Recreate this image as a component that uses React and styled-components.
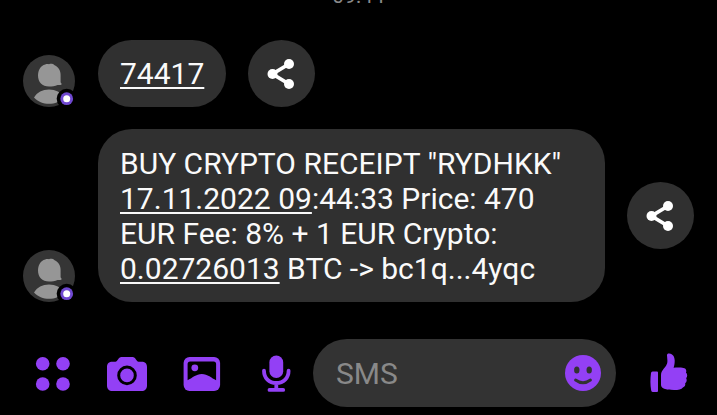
import React from 'react';
import styled, { createGlobalStyle } from 'styled-components';

const GlobalStyle = createGlobalStyle`
  * {
    box-sizing: border-box;
  }
  body {
    margin: 0;
    background: #000;
    font-family: Roboto, 'Noto Sans', sans-serif;
  }
`;

const Screen = styled.main`
  display: flex;
  flex-direction: column;
  height: 100vh;
  overflow: hidden;
  background: #000;
  color: #fafafa;
`;

// newest messages stick to the bottom, older ones run off the top
const Thread = styled.section`
  flex: 1;
  min-height: 0;
  display: flex;
  flex-direction: column;
  justify-content: flex-end;
  gap: 22px;
  padding: 0 23px;
  overflow: hidden;
`;

const Timestamp = styled.time`
  margin-bottom: 8px;
  font-size: 21px;
  line-height: 28px;
  text-align: center;
  color: #8a8a8a;
`;

const Row = styled.div`
  display: flex;
  align-items: flex-end;
  gap: 22px;
`;

const Avatar = styled.svg`
  flex: none;
  width: 53px;
  height: 52px;
`;

const Bubble = styled.p`
  flex: ${(props) => (props.$wide ? '1' : 'none')};
  margin: 0;
  padding: ${(props) => (props.$wide ? '17px 22px 16px' : '16px 22px')};
  border-radius: 34px;
  background: #303030;
  font-size: 30px;
  line-height: 35px;
`;

const DataLink = styled.a`
  color: inherit;
  text-decoration: underline;
  text-decoration-thickness: 2px;
  text-decoration-skip-ink: none;
  text-underline-offset: 3px;
`;

const IconButton = styled.button`
  display: flex;
  align-items: center;
  justify-content: center;
  padding: 0;
  border: none;
  background: none;
  color: #9340f5;
  cursor: pointer;
`;

const ShareButton = styled(IconButton)`
  flex: none;
  align-self: center;
  width: 67px;
  height: 67px;
  border-radius: 50%;
  background: #303030;
  color: #fff;
`;

const Composer = styled.form`
  display: flex;
  align-items: stretch;
  height: 68px;
  margin: 37px 0 8px;
  padding-left: 16px;
`;

const Tools = styled.div`
  flex: none;
  display: grid;
  grid-template-columns: repeat(4, 1fr);
  width: 297px;
`;

const Field = styled.div`
  flex: 1;
  min-width: 0;
  display: flex;
  align-items: center;
  padding: 0 15px 0 23px;
  border-radius: 34px;
  background: #333;
`;

const TextInput = styled.input`
  flex: 1;
  min-width: 0;
  padding: 0;
  border: none;
  outline: none;
  background: none;
  color: #fafafa;
  font-family: inherit;
  font-size: 30px;
  line-height: 35px;
  &::placeholder {
    color: #898989;
    opacity: 1;
  }
`;

const LikeButton = styled(IconButton)`
  flex: none;
  width: 101px;
  padding-right: 29px;
  justify-content: flex-end;
`;

const Sender = () => (
  <Avatar viewBox="0 0 53 52" role="img" aria-label="Sender">
    <circle cx="26" cy="26" r="26" fill="#353535" />
    <path
      d="M26 9.2C28 8.4 30 8.8 31.6 10.2C35.6 12 37.6 15.8 37.6 20V26.5C37.6 27.8 38 28.5 39 28.9C37.9 30 36.3 30.4 34.6 29.9C32 31.3 29 31.6 26 31.6C19.2 31.6 15 27.2 15 20.6C15 15 17.6 10.6 22.2 9.4C23.6 8.8 25 8.8 26 9.2Z"
      fill="#969696"
    />
    <path
      d="M11 42.5C14 37.6 19.5 34.6 26 34.6C32.5 34.6 38 37.6 41 42.5C37.2 46.6 31.8 48.8 26 48.8C20.2 48.8 14.8 46.6 11 42.5Z"
      fill="#969696"
    />
    <circle cx="43.7" cy="43.7" r="10" fill="#000" />
    <circle cx="43.7" cy="43.7" r="6.4" fill="#6f48d0" />
    <circle cx="43.7" cy="43.7" r="3.5" fill="#fff" />
  </Avatar>
);

const Share = () => (
  <ShareButton type="button" aria-label="Share">
    <svg width="34" height="34" viewBox="0 0 34 34" fill="currentColor">
      <path
        d="M24 7L7.5 17L24 27"
        fill="none"
        stroke="currentColor"
        strokeWidth="3.8"
      />
      <circle cx="7.5" cy="17" r="5" />
      <circle cx="24" cy="7" r="5" />
      <circle cx="24" cy="27" r="5" />
    </svg>
  </ShareButton>
);

const DotsIcon = () => (
  <svg width="40" height="40" viewBox="0 0 40 40" fill="currentColor">
    <circle cx="9.7" cy="10.8" r="6.8" />
    <circle cx="30" cy="10.8" r="6.8" />
    <circle cx="9.7" cy="31" r="6.8" />
    <circle cx="30" cy="31" r="6.8" />
  </svg>
);

const CameraIcon = () => (
  <svg width="40" height="40" viewBox="0 0 40 40" fill="currentColor">
    <path d="M5.5 8.8H8.5C10.5 8.8 11.2 4 14.5 4H25.5C28.8 4 29.5 8.8 31.5 8.8H34.5C38 8.8 40 10.5 40 14V32.5C40 36 38 38 34.5 38H5.5C2 38 0 36 0 32.5V14C0 10.5 2 8.8 5.5 8.8Z" />
    <circle cx="20" cy="22.4" r="8.3" fill="none" stroke="#000" strokeWidth="3" />
  </svg>
);

const PhotoIcon = () => (
  <svg width="40" height="40" viewBox="0 0 40 40" fill="currentColor">
    <rect x="1.6" y="4" width="36.5" height="34" rx="6" />
    <path
      d="M8.1 8.5H31.6Q34.1 8.5 34.1 11V27.3C29.6 25.3 25.6 21.1 19.8 21.1C14.1 21.1 10.1 25.3 5.6 27.3V11Q5.6 8.5 8.1 8.500Z"
      fill="#000"
    />
    <circle cx="12.8" cy="14.8" r="3.4" />
  </svg>
);

const MicIcon = () => (
  <svg width="40" height="40" viewBox="0 0 40 40" fill="currentColor">
    <rect x="13.4" y="2.5" width="13.8" height="22.6" rx="6.9" />
    <path
      d="M8 17.7C8 25 13 30 20.3 30C27.6 30 32.6 25 32.6 17.7M20.3 30V36.6M13.500 36.900H27.200"
      fill="none"
      stroke="currentColor"
      strokeWidth="3.8"
      strokeLinecap="round"
    />
  </svg>
);

const SmileIcon = () => (
  <svg width="36" height="36" viewBox="0 0 36 36">
    <circle cx="18" cy="18" r="18" fill="currentColor" />
    <ellipse cx="11.8" cy="15" rx="2.7" ry="3.5" fill="#333" />
    <ellipse cx="24.2" cy="15" rx="2.7" ry="3.5" fill="#333" />
    <path
      d="M10.5 25Q18 30.5 25.5 25"
      fill="none"
      stroke="#333"
      strokeWidth="2.8"
      strokeLinecap="round"
    />
  </svg>
);

const LikeIcon = () => (
  <svg width="38" height="40" viewBox="0 0 38 40" fill="currentColor">
    <path d="M2.5 18.5H7Q8 18.5 8 19.5V38Q8 39 7 39H3Q1.5 39 1.2 37.5C0.2 32 0.2 26 1 20Q1.2 18.5 2.5 18.500Z" />
    <path d="M17 2.2C17 0.8 18 0.3 19.2 0.5C23 1 24.7 3.8 24.7 7.5C24.7 10.2 24.4 12.4 23.6 14.7C27 14.5 31 14.5 33.5 14.9C35.9 15.3 37 17.5 35.9 19.6C37.6 21.2 37.6 23.8 36.2 25.2C37.2 27 36.7 29.2 35.2 30.2C35.7 32.2 34.6 33.9 32.9 34.4C31.5 36.3 28.5 36.9 24 36.9C19.5 36.9 16.5 36.5 14.2 35.7C11.9 34.9 11 33.7 11 31.5V22.5C11 20 11.7 18.5 13 16.8C15.5 13.5 17.6 11.5 17.4 7.5Z" />
  </svg>
);

const tools = [
  { label: 'More actions', Icon: DotsIcon },
  { label: 'Camera', Icon: CameraIcon },
  { label: 'Gallery', Icon: PhotoIcon },
  { label: 'Voice message', Icon: MicIcon },
];

class App extends React.Component {
  state = {
    text: '',
  };

  handleChange = (e) => {
    this.setState({ text: e.target.value });
  };

  render() {
    return (
      <Screen>
        <GlobalStyle />
        <Thread>
          <Timestamp>09:44</Timestamp>
          <Row>
            <Sender />
            <Bubble>
              <DataLink href="tel:74417">74417</DataLink>
            </Bubble>
            <Share />
          </Row>
          <Row>
            <Sender />
            <Bubble $wide>
              BUY CRYPTO RECEIPT "RYDHKK"{' '}
              <DataLink href="tel:1711202209">17.11.2022 09</DataLink>:44:33
              Price: 470 EUR Fee: 8% + 1 EUR Crypto:{' '}
              <DataLink href="tel:002726013">0.02726013</DataLink> BTC -&gt;
              bc1q...4yqc
            </Bubble>
            <Share />
          </Row>
        </Thread>
        <Composer onSubmit={(e) => e.preventDefault()}>
          <Tools>
            {tools.map(({ label, Icon }) => (
              <IconButton key={label} type="button" aria-label={label}>
                <Icon />
              </IconButton>
            ))}
          </Tools>
          <Field>
            <TextInput
              type="text"
              aria-label="Message"
              placeholder="SMS"
              value={this.state.text}
              onChange={this.handleChange}
            />
            <IconButton type="button" aria-label="Emoji">
              <SmileIcon />
            </IconButton>
          </Field>
          <LikeButton type="button" aria-label="Like">
            <LikeIcon />
          </LikeButton>
        </Composer>
      </Screen>
    );
  }
}

export default App;
